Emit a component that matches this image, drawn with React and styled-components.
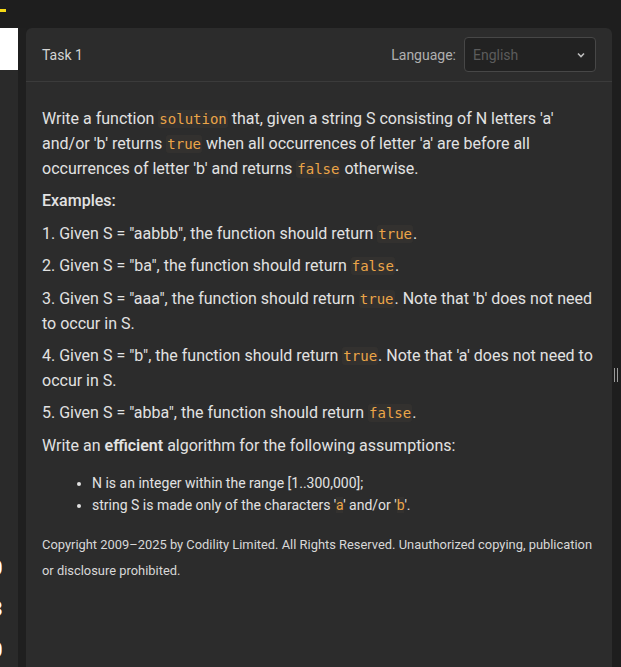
import React from 'react'
import styled, { createGlobalStyle } from 'styled-components'

const Global = createGlobalStyle`
    html, body {
        margin: 0;
        padding: 0;
        background: #1e1e1e;
        height: 100%;
    }
    body {
        font-family: Roboto, "Liberation Sans", sans-serif;
        overflow: hidden;
    }
`

const Page = styled.div`
    width: 621px;
    height: 667px;
    display: flex;
    flex-direction: column;
    background: #1e1e1e;
`

const TopBar = styled.div`
    height: 28px;
    flex: none;
    display: flex;
    align-items: flex-start;
`

const Accent = styled.div`
    width: 6px;
    height: 3px;
    margin-top: 9px;
    background: #f5d916;
`

const Main = styled.div`
    flex: 1;
    display: flex;
    min-height: 0;
`

const LeftRail = styled.div`
    width: 18px;
    flex: none;
    background: #2a2a2a;
    display: flex;
    flex-direction: column;
    overflow: hidden;
`

const WhiteBlock = styled.div`
    height: 42px;
    background: #ffffff;
`

const RailDigits = styled.div`
    margin-top: auto;
    margin-left: -9px;
    margin-bottom: 5px;
    display: flex;
    flex-direction: column;
    gap: 17px;
    color: #ffffff;
    font-size: 20px;
    font-weight: 700;
    line-height: 24px;
`

const Gutter = styled.div`
    width: 8px;
    flex: none;
    background: #1f1f1f;
`

const Panel = styled.section`
    width: 586px;
    flex: none;
    background: #2c2c2c;
    border-radius: 6px 6px 0 0;
    display: flex;
    flex-direction: column;
`

const Header = styled.header`
    height: 53px;
    display: flex;
    align-items: center;
    padding: 0 16px;
    border-bottom: 1px solid #3b3b3b;
`

const Title = styled.div`
    font-size: 14px;
    color: #d4d4d4;
`

const LangLabel = styled.label`
    margin-left: auto;
    font-size: 14px;
    color: #b0b0b0;
    margin-right: 8px;
`

const Select = styled.div`
    width: 130px;
    height: 33px;
    box-sizing: content-box;
    border: 1px solid #474747;
    border-radius: 4px;
    background: #222222;
    display: flex;
    align-items: center;
    font-size: 14px;
    color: #5c5c5c;
    span {
        margin-left: 8px;
    }
    svg {
        margin-left: auto;
        margin-right: 10px;
    }
`

const Body = styled.div`
    padding: 24px 16px 0;
    color: #e2e2e2;
    font-size: 16px;
    line-height: 25px;
`

const Para = styled.p`
    margin: 0 0 7.4px;
    font-weight: ${p => (p.$bold ? 500 : 400)};
`

const Code = styled.code`
    font-family: "DejaVu Sans Mono", "Liberation Mono", monospace;
    font-size: 14px;
    line-height: 1;
    color: #eca548;
    background: #33312f;
    border-radius: 3px;
    padding: 1px 1px;
`

const Bullets = styled.ul`
    margin: 14px 0 0;
    padding-left: 50px;
    font-size: 14px;
    line-height: 22px;
    li::marker {
        font-size: 13px;
    }
`

const Quote = styled.span`
    color: #eca548;
    background: #33312f;
`

const Copyright = styled.p`
    margin: 16px 0 0;
    font-size: 12.9px;
    line-height: 26px;
    color: #d8d8d8;
`

const RightRail = styled.div`
    flex: 1;
    background: #1e1e1e;
    display: flex;
    flex-direction: column;
    align-items: center;
`

const Grip = styled.div`
    margin-top: 340px;
    width: 4px;
    height: 14px;
    border-left: 1px solid #9a9a9a;
    border-right: 1px solid #9a9a9a;
    box-sizing: border-box;
    margin-left: -1px;
`

const Chevron = () => (
    <svg width="8" height="6" viewBox="0 0 8 6">
        <path d="M1 1.5 L4 4.5 L7 1.5" fill="none" stroke="#bdbdbd" strokeWidth="1.6" />
    </svg>
)

const App = () => {
    return (
        <Page>
            <Global />
            <TopBar>
                <Accent />
            </TopBar>
            <Main>
                <LeftRail>
                    <WhiteBlock />
                    <RailDigits>
                        <span>0</span>
                        <span>3</span>
                        <span>0</span>
                    </RailDigits>
                </LeftRail>
                <Gutter />
                <Panel>
                    <Header>
                        <Title>Task 1</Title>
                        <LangLabel>Language:</LangLabel>
                        <Select>
                            <span>English</span>
                            <Chevron />
                        </Select>
                    </Header>
                    <Body>
                        <Para>
                            Write a function <Code>solution</Code> that, given a string S consisting of N letters 'a'
                            and/or 'b' returns <Code>true</Code> when all occurrences of letter 'a' are before all
                            occurrences of letter 'b' and returns <Code>false</Code> otherwise.
                        </Para>
                        <Para $bold>Examples:</Para>
                        <Para>1. Given S = "aabbb", the function should return <Code>true</Code>.</Para>
                        <Para>2. Given S = "ba", the function should return <Code>false</Code>.</Para>
                        <Para>
                            3. Given S = "aaa", the function should return <Code>true</Code>. Note that 'b' does not need
                            to occur in S.
                        </Para>
                        <Para>
                            4. Given S = "b", the function should return <Code>true</Code>. Note that 'a' does not need to
                            occur in S.
                        </Para>
                        <Para>5. Given S = "abba", the function should return <Code>false</Code>.</Para>
                        <Para>
                            Write an <strong style={{ fontWeight: 600 }}>efficient</strong> algorithm for the following assumptions:
                        </Para>
                        <Bullets>
                            <li>N is an integer within the range [1..300,000];</li>
                            <li>
                                string S is made only of the characters '<Quote>a</Quote>' and/or '<Quote>b</Quote>'.
                            </li>
                        </Bullets>
                        <Copyright>
                            Copyright 2009–2025 by Codility Limited. All Rights Reserved. Unauthorized copying, publication
                            or disclosure prohibited.
                        </Copyright>
                    </Body>
                </Panel>
                <RightRail>
                    <Grip />
                </RightRail>
            </Main>
        </Page>
    )
}

export default App
